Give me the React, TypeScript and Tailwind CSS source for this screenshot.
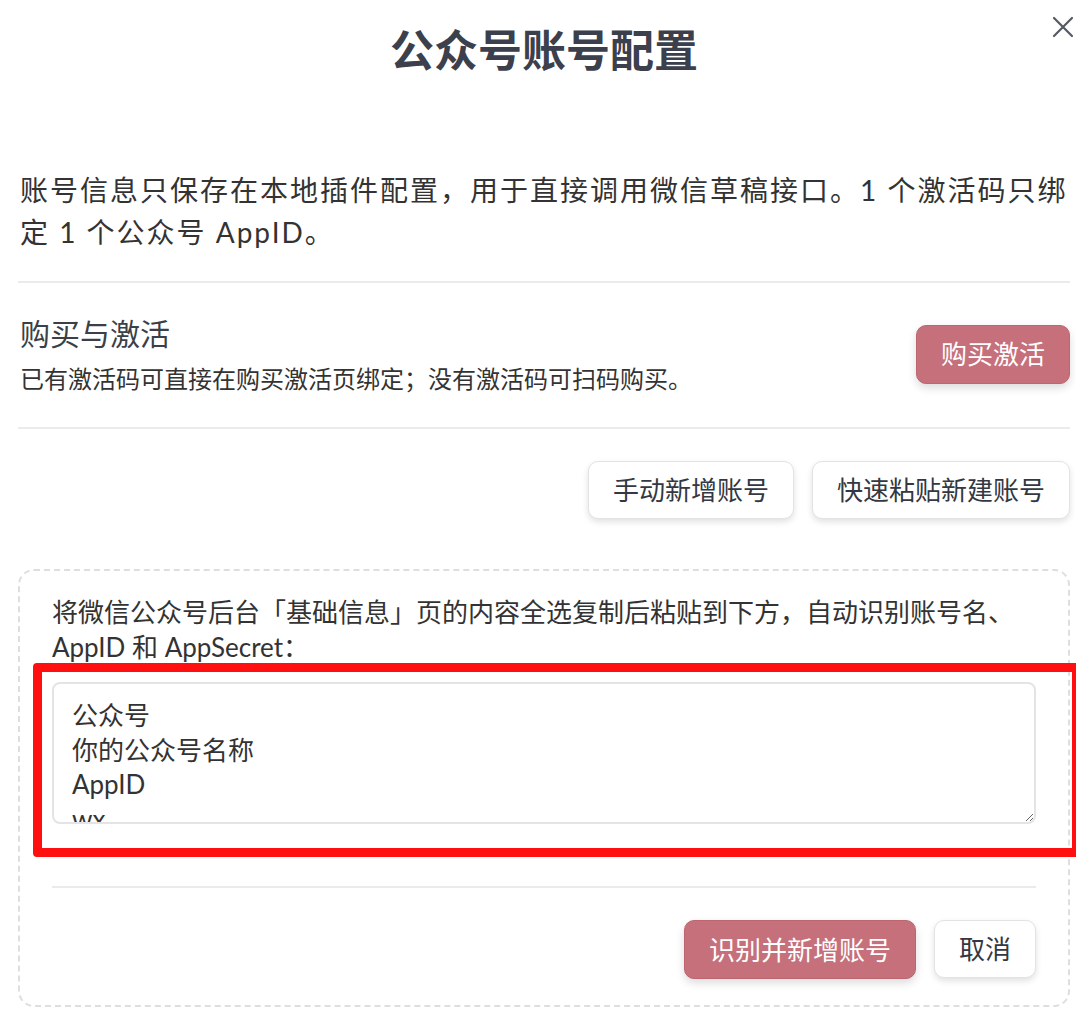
import React, { useState } from "react";

const pasteSample = `公众号
你的公众号名称
AppID
wx
AppSecret
`;

function GhostButton({ children }: { children: React.ReactNode }) {
  return (
    <button className="h-[58px] rounded-[10px] border border-[#e3e3e3] bg-white px-[24px] text-[26px] leading-none text-[#333842] shadow-[0_3px_6px_rgba(0,0,0,0.12)]">
      {children}
    </button>
  );
}

function PrimaryButton({ children }: { children: React.ReactNode }) {
  return (
    <button className="h-[59px] rounded-[10px] border border-[#bd6571] bg-[#c6707b] px-[24px] text-[26px] leading-none text-white shadow-[0_4px_8px_rgba(0,0,0,0.14)]">
      {children}
    </button>
  );
}

export default function App() {
  const [paste, setPaste] = useState(pasteSample);

  return (
    <div
      className="relative h-[1026px] overflow-hidden bg-white pl-[18px] pr-[6px] text-[#333]"
      style={{ fontFamily: 'Lato, "Noto Sans CJK SC", sans-serif' }}
    >
      {/* header */}
      <div className="flex h-[80px] items-end justify-center">
        <h1 className="h-[60px] text-[44px] font-bold leading-[60px] text-[#3b404c]">
          公众号账号配置
        </h1>
      </div>
      <button className="absolute right-[2px] top-[16px] p-0 text-[#555a62]">
        <svg width="22" height="22" viewBox="0 0 22 22" fill="none" stroke="currentColor" strokeWidth="2.2" strokeLinecap="round">
          <path d="M2 2 L20 20 M20 2 L2 20" />
        </svg>
      </button>

      <p className="mt-[89px] pl-[2px] text-[28px] leading-[42px] tracking-[2px] text-[#333]">
        账号信息只保存在本地插件配置，用于直接调用微信草稿接口。1 个激活码只绑定 1 个公众号 AppID。
      </p>

      <div className="mt-[28px] h-[2px] bg-[#ebebeb]" />

      {/* purchase */}
      <div className="mt-[30px] flex items-center justify-between pl-[2px]">
        <div>
          <div className="text-[30px] leading-[40px] text-[#3a3f48]">购买与激活</div>
          <div className="mt-[10px] text-[24px] leading-[32px] text-[#333]">
            已有激活码可直接在购买激活页绑定；没有激活码可扫码购买。
          </div>
        </div>
        <PrimaryButton>购买激活</PrimaryButton>
      </div>

      <div className="mt-[32px] h-[2px] bg-[#ebebeb]" />

      <div className="mt-[32px] flex justify-end gap-[18px]">
        <GhostButton>手动新增账号</GhostButton>
        <GhostButton>快速粘贴新建账号</GhostButton>
      </div>

      {/* quick paste panel */}
      <div className="mt-[50px] rounded-[16px] border-2 border-dashed border-[#dedede] px-[32px] pb-[26px] pt-[24px]">
        <p className="text-[26px] leading-[35px] text-[#333]">
          将微信公众号后台「基础信息」页的内容全选复制后粘贴到下方，自动识别账号名、AppID 和 AppSecret：
        </p>

        <div className="relative mt-[17px]">
          <textarea
            value={paste}
            onChange={(e) => setPaste(e.target.value)}
            className="block h-[142px] w-full resize-y overflow-hidden rounded-[8px] border-2 border-[#e4e4e4] bg-white px-[18px] pt-[14px] text-[26px] leading-[34.5px] text-[#333] outline-none"
          />
          {/* annotation frame */}
          <div className="pointer-events-none absolute bottom-[-33px] left-[-19px] right-[-45px] top-[-19px] rounded-[4px] border-[9px] border-[#ff0f0f]" />
        </div>

        <div className="mt-[62px] h-[2px] bg-[#ebebeb]" />

        <div className="mt-[32px] flex justify-end gap-[18px]">
          <PrimaryButton>识别并新增账号</PrimaryButton>
          <GhostButton>取消</GhostButton>
        </div>
      </div>
    </div>
  );
}
